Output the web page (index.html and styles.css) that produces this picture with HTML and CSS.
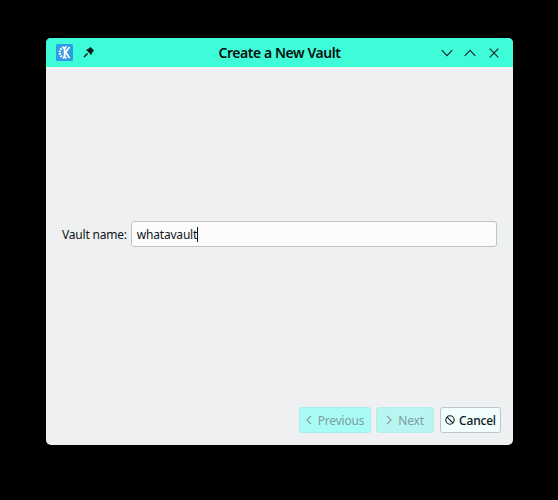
FILE: index.html
```html
<!DOCTYPE html>
<html lang="en">
<head>
<meta charset="utf-8">
<title>Create a New Vault</title>
<link rel="stylesheet" href="styles.css">
</head>
<body>
<div class="window">
  <header class="titlebar">
    <div class="tb-left">
      <svg class="kde" width="17" height="17" viewBox="0 0 17 17">
        <rect width="17" height="17" rx="1.5" fill="#2f9ae6"/>
        <path d="M10.5 3.4 A5.3 5.3 0 1 0 10.5 13.6" fill="none" stroke="#fff" stroke-width="2.4" stroke-dasharray="1.6 1"/>
        <path d="M8.6 3v11M13.6 3 9.6 8.2l4 5.8" fill="none" stroke="#fff" stroke-width="1.8"/>
      </svg>
      <svg class="pin" width="12" height="12" viewBox="0 0 12 12">
        <path d="M7.3.8 11.2 4.7 9.9 5.5 8.6 7.9 8.4 9.2 2.8 3.6 4.1 3.4 6.5 2.1Z" fill="#0b1a18"/>
        <path d="M4.6 7.4 1 11" stroke="#0b1a18" stroke-width="1.4" fill="none"/>
      </svg>
    </div>
    <h1 class="title">Create a New Vault</h1>
    <div class="tb-right">
      <svg width="12" height="8" viewBox="0 0 12 8"><path d="M.7 1.2 6 6.6l5.3-5.4" class="wc"/></svg>
      <svg width="12" height="8" viewBox="0 0 12 8"><path d="M.7 6.8 6 1.4l5.3 5.4" class="wc"/></svg>
      <svg class="wc-close" width="10" height="10" viewBox="0 0 10 10"><path d="M.7.7l8.6 8.6M9.3.7.7 9.3" class="wc"/></svg>
    </div>
  </header>
  <main class="content">
    <div class="form-row">
      <label class="label" for="vault">Vault name:</label>
      <div class="input" id="vault"><span>whatavault</span><i class="caret"></i></div>
    </div>
  </main>
  <footer class="buttons">
    <button class="btn btn-off btn-prev" disabled>
      <svg width="6" height="10" viewBox="0 0 6 10"><path d="M5 .8.9 5 5 9.2" class="chev"/></svg>Previous
    </button>
    <button class="btn btn-off btn-next" disabled>
      <svg width="6" height="10" viewBox="0 0 6 10"><path d="M1 .8 5.1 5 1 9.2" class="chev"/></svg>Next
    </button>
    <button class="btn btn-cancel">
      <svg width="10" height="10" viewBox="0 0 10 10"><circle cx="5" cy="5" r="4.2" class="ban"/><path d="M2.2 2.2l5.6 5.6" class="ban"/></svg>Cancel
    </button>
  </footer>
</div>
</body>
</html>
```
FILE: styles.css
```css
* { box-sizing: border-box; }
html, body { margin: 0; height: 100%; background: #000; overflow: hidden; }
body { padding: 38px 45px 55px 46px; font-family: "Noto Sans", sans-serif; font-size: 12px; letter-spacing: -0.2px; color: #0f1518; }
.window { height: 407px; display: flex; flex-direction: column; background: #eff0f1; border-radius: 5px; overflow: hidden; }
.titlebar { height: 29px; flex: none; display: flex; align-items: center; justify-content: space-between; position: relative; background: #3ffcd9; padding: 0 14px 0 10px; }
.tb-left { display: flex; align-items: center; gap: 10px; }
.pin { margin-top: -1px; }
.title { position: absolute; left: 0; right: 0; margin: 0; text-align: center; font-size: 14px; font-weight: 600; letter-spacing: -0.45px; line-height: 28px; color: #07100f; pointer-events: none; }
.tb-right { display: flex; align-items: center; gap: 11px; }
.wc-close { margin-left: 2px; }
.wc { fill: none; stroke: #14282a; stroke-width: 1.2; }
.content { flex: 1; display: flex; align-items: center; padding: 0 16px 0 16px; }
.form-row { width: 100%; display: flex; align-items: center; gap: 4px; margin-top: -6px; }
.label { white-space: nowrap; }
.input { flex: 1; height: 26px; display: flex; align-items: center; padding: 0 5px; background: #fcfcfc; border: 1px solid #bfc3c6; border-radius: 3px; }
.caret { width: 1px; height: 15px; background: #0f1518; }
.buttons { flex: none; display: flex; justify-content: flex-end; gap: 5px; padding: 0 12px 12px 0; }
.btn { height: 26px; display: flex; align-items: center; justify-content: center; gap: 6px; font: inherit; letter-spacing: inherit; border-radius: 3px; padding: 0; }
.btn-off { background: #aff9f4; border: 1px solid #a5ecea; color: #7f9b9c; }
.btn-prev { width: 72px; background: #a9fbf5; }
.btn-next { width: 58px; background: #b9f6f2; border-color: #b2efec; margin-right: 1px; }
.btn-cancel { width: 61px; gap: 4px; background: #f0fefd; border: 1px solid #bcc5c7; color: #0f1518; font-weight: 500; }
.chev { fill: none; stroke: #7f9b9c; stroke-width: 1.1; }
.ban { fill: none; stroke: #0f1518; stroke-width: 1.1; }
```
